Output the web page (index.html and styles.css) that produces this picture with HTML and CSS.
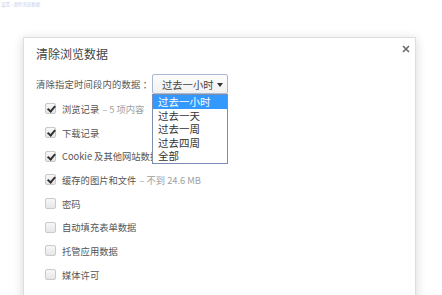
FILE: index.html
```html
<!DOCTYPE html>
<html lang="zh-CN">
<head>
<meta charset="utf-8">
<link rel="stylesheet" href="styles.css">
</head>
<body>
<div class="toplink">设置 › 清除浏览数据</div>
<div class="dialog">
  <button class="close" aria-label="关闭">
    <svg width="8" height="8" viewBox="0 0 8 8"><path d="M1 1L7 7M7 1L1 7" stroke="#6a6a6a" stroke-width="1.6"/></svg>
  </button>
  <h1 class="title">清除浏览数据</h1>
  <div class="range">
    <span class="range-label">清除指定时间段内的数据 ：</span>
    <div class="select-wrap">
      <div class="select">过去一小时<span class="caret"></span></div>
      <ul class="menu">
        <li class="sel">过去一小时</li>
        <li>过去一天</li>
        <li>过去一周</li>
        <li>过去四周</li>
        <li>全部</li>
      </ul>
    </div>
  </div>
  <ul class="opts">
    <li><span class="cb on"></span>浏览记录<span class="muted"> – 5 项内容</span></li>
    <li><span class="cb on"></span>下载记录</li>
    <li><span class="cb on"></span>Cookie 及其他网站数据</li>
    <li><span class="cb on"></span>缓存的图片和文件<span class="muted"> – 不到 24.6 MB</span></li>
    <li><span class="cb"></span>密码</li>
    <li><span class="cb"></span>自动填充表单数据</li>
    <li><span class="cb"></span>托管应用数据</li>
    <li><span class="cb"></span>媒体许可</li>
  </ul>
</div>
</body>
</html>
```
FILE: styles.css
```css
html, body {
  margin: 0;
  padding: 0;
  background: #fff;
  overflow: hidden;
}
body {
  font-family: "Noto Sans CJK SC", "Noto Sans", sans-serif;
  color: #555;
  font-size: 9.5px;
}
.toplink {
  height: 10px;
  font-size: 4.5px;
  line-height: 9px;
  color: #c5d3ea;
  padding-left: 1px;
}
.dialog {
  position: relative;
  margin: 27px 0 0 23px;
  width: 393px;
  height: 300px;
  background: #fff;
  border: 1px solid #dedede;
  box-shadow: 0 2px 10px rgba(0,0,0,0.16);
  box-sizing: border-box;
  padding: 6px 0 0 12px;
}
.close {
  position: absolute;
  right: 3px;
  top: 5px;
  width: 12px;
  height: 12px;
  border: 0;
  padding: 0;
  background: none;
  display: flex;
  align-items: center;
  justify-content: center;
}
.title {
  margin: 0;
  font-size: 12px;
  font-weight: normal;
  color: #444;
  line-height: 20px;
}
.range {
  display: flex;
  align-items: center;
  margin-top: 10px;
  height: 20px;
}
.range-label {
  color: #555;
  font-size: 9.3px;
  letter-spacing: 0.2px;
  width: 116px;
  white-space: nowrap;
}
.select-wrap {
  position: relative;
}
.select {
  width: 76px;
  height: 20px;
  box-sizing: border-box;
  border: 1px solid #a9b8d4;
  border-radius: 2px;
  background: linear-gradient(#fdfdfd, #f0f0f0);
  display: flex;
  align-items: center;
  padding-left: 9px;
  font-size: 10.3px;
  color: #444;
  position: relative;
}
.caret {
  position: absolute;
  right: 4px;
  top: 8px;
  border-left: 3.5px solid transparent;
  border-right: 3.5px solid transparent;
  border-top: 4px solid #333;
}
.menu {
  position: absolute;
  left: 0;
  top: 20px;
  width: 76px;
  margin: 0;
  padding: 0;
  list-style: none;
  background: #fff;
  border: 1px solid #7a8db3;
  box-sizing: border-box;
  z-index: 2;
}
.menu li {
  height: 13.6px;
  line-height: 13.6px;
  padding-left: 5px;
  font-size: 10.5px;
  color: #333;
}
.menu li.sel {
  background: #3399ff;
  color: #fff;
}
.opts {
  list-style: none;
  margin: 3px 0 0 9px;
  padding: 0;
}
.opts li {
  height: 23.7px;
  display: flex;
  align-items: center;
  font-size: 9.3px;
  color: #555;
  white-space: nowrap;
}
.muted {
  color: #a0a0a0;
  margin-left: 3px;
}
.cb {
  width: 11px;
  height: 11px;
  flex: none;
  box-sizing: border-box;
  border: 1px solid #cacaca;
  border-radius: 2px;
  background: linear-gradient(#f7f7f7, #e6e6e6);
  margin-right: 6px;
  position: relative;
}
.cb.on::after {
  content: "";
  position: absolute;
  left: 3px;
  top: 0px;
  width: 2.5px;
  height: 6px;
  border-right: 2px solid #333;
  border-bottom: 2px solid #333;
  transform: rotate(40deg);
}
```
